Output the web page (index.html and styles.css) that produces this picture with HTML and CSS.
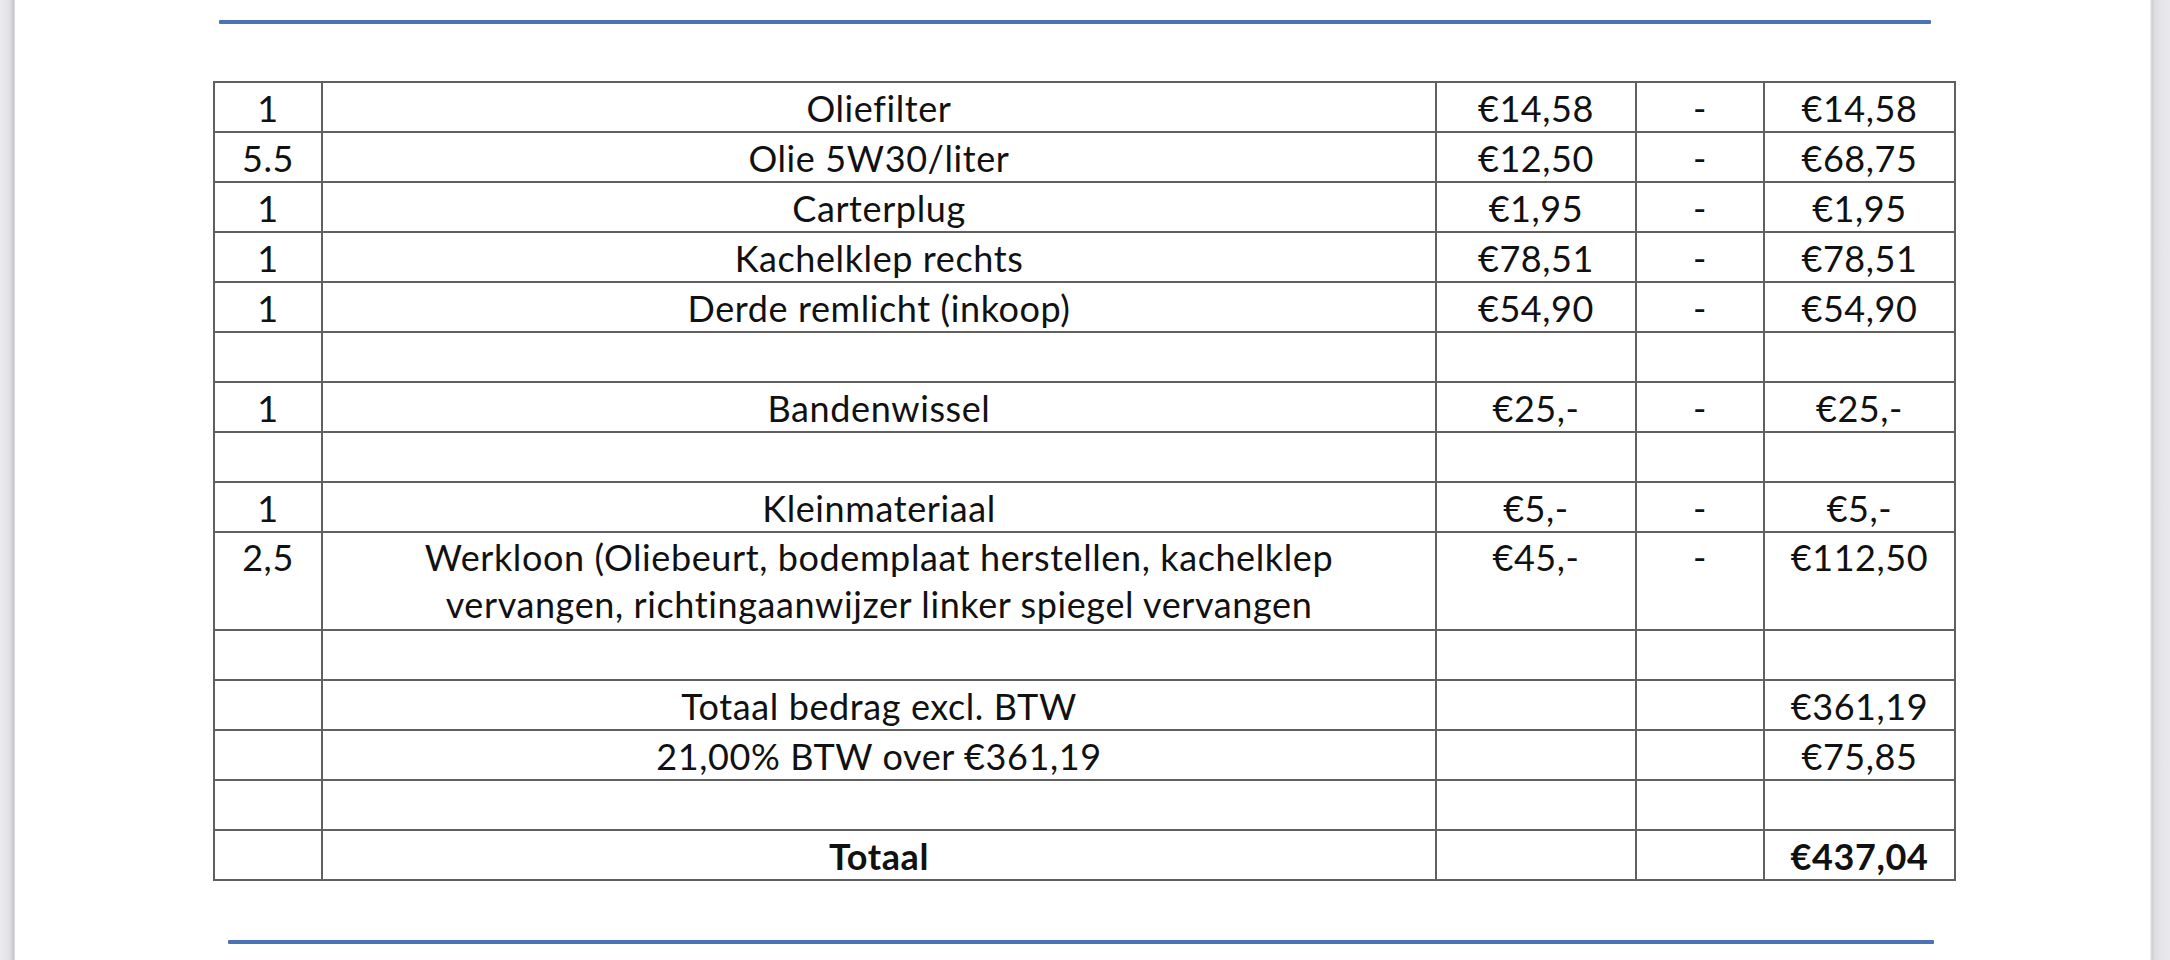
FILE: index.html
```html
<!DOCTYPE html>
<html lang="nl">
<head>
<meta charset="utf-8">
<title>Factuur</title>
<link rel="stylesheet" href="styles.css">
</head>
<body>
<div class="viewer">
  <div class="edge edge-left"></div>
  <main class="page">
    <div class="rule rule-top"></div>
    <table class="invoice">
      <colgroup>
        <col class="c-qty">
        <col class="c-desc">
        <col class="c-price">
        <col class="c-disc">
        <col class="c-total">
      </colgroup>
      <tbody>
        <tr><td>1</td><td>Oliefilter</td><td>€14,58</td><td>-</td><td>€14,58</td></tr>
        <tr><td>5.5</td><td>Olie 5W30/liter</td><td>€12,50</td><td>-</td><td>€68,75</td></tr>
        <tr><td>1</td><td>Carterplug</td><td>€1,95</td><td>-</td><td>€1,95</td></tr>
        <tr><td>1</td><td>Kachelklep rechts</td><td>€78,51</td><td>-</td><td>€78,51</td></tr>
        <tr><td>1</td><td>Derde remlicht (inkoop)</td><td>€54,90</td><td>-</td><td>€54,90</td></tr>
        <tr><td></td><td></td><td></td><td></td><td></td></tr>
        <tr><td>1</td><td>Bandenwissel</td><td>€25,-</td><td>-</td><td>€25,-</td></tr>
        <tr><td></td><td></td><td></td><td></td><td></td></tr>
        <tr><td>1</td><td>Kleinmateriaal</td><td>€5,-</td><td>-</td><td>€5,-</td></tr>
        <tr class="double"><td>2,5</td><td>Werkloon (Oliebeurt, bodemplaat herstellen, kachelklep<br>vervangen, richtingaanwijzer linker spiegel vervangen</td><td>€45,-</td><td>-</td><td>€112,50</td></tr>
        <tr><td></td><td></td><td></td><td></td><td></td></tr>
        <tr><td></td><td>Totaal bedrag excl. BTW</td><td></td><td></td><td>€361,19</td></tr>
        <tr><td></td><td>21,00% BTW over €361,19</td><td></td><td></td><td>€75,85</td></tr>
        <tr><td></td><td></td><td></td><td></td><td></td></tr>
        <tr class="grand"><td></td><td>Totaal</td><td></td><td></td><td>€437,04</td></tr>
      </tbody>
    </table>
    <div class="rule rule-bottom"></div>
  </main>
  <div class="edge edge-right"></div>
</div>
</body>
</html>
```

FILE: styles.css
```css
html, body {
  margin: 0;
  padding: 0;
  background: #ffffff;
}

.viewer {
  display: flex;
  width: 2170px;
  height: 960px;
  overflow: hidden;
}

.edge {
  flex: none;
  height: 100%;
}

.edge-left {
  width: 15px;
  background: linear-gradient(to right, #ececf0 0px, #e2e2e6 9px, #d2d2d6 12px, #c6c6ca 14px, #eeeef0 15px);
}

.edge-right {
  width: 20px;
  background: linear-gradient(to right, #f4f4f6 0px, #cfcfd3 2px, #dedee2 5px, #e6e6ea 12px, #e9e9ed 20px);
}

.page {
  flex: 1;
  background: #ffffff;
  display: flex;
  flex-direction: column;
  align-items: flex-start;
}

.rule {
  height: 4px;
  background: #4a72b6;
  border-radius: 1px;
}

.rule-top {
  margin-top: 20px;
  margin-left: 204px;
  width: 1712px;
}

.rule-bottom {
  margin-top: 59px;
  margin-left: 213px;
  width: 1706px;
}

.invoice {
  margin-top: 57px;
  margin-left: 198px;
  width: 1741px;
  border-collapse: collapse;
  table-layout: fixed;
  font-family: Lato, "Liberation Sans", sans-serif;
  font-size: 36px;
  letter-spacing: 0.6px;
  line-height: 46px;
  color: #111111;
}

.c-qty { width: 108px; }
.c-desc { width: 1114px; }
.c-price { width: 200px; }
.c-disc { width: 128px; }
.c-total { width: 191px; }

.invoice tr {
  height: 50px;
}

.invoice tr.double {
  height: 98px;
}

.invoice tr.double td {
  line-height: 47px;
  padding-top: 1px;
}

.invoice td {
  border: 2px solid #606060;
  padding: 2px 4px 0;
  text-align: center;
  vertical-align: top;
  white-space: nowrap;
}

.invoice tr.grand td {
  font-weight: 700;
}
```
